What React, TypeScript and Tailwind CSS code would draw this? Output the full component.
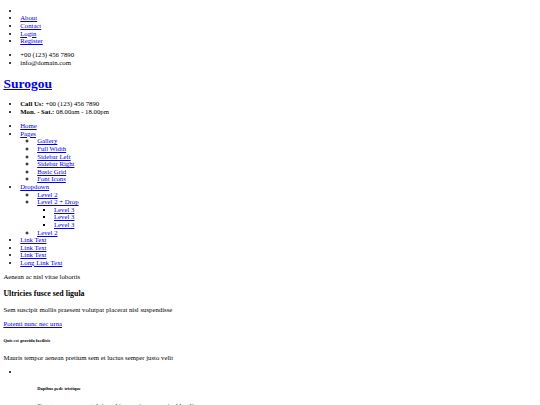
import React from "react";

const A = ({ children }: { children: React.ReactNode }) => (
  <a href="#" className="text-[#0000ee] underline">
    {children}
  </a>
);

const topLinks = ["About", "Contact", "Login", "Register"];
const pages = ["Gallery", "Full Width", "Sidebar Left", "Sidebar Right", "Basic Grid", "Font Icons"];

export default function App() {
  return (
    <div className="[zoom:0.421875] font-['Liberation_Serif',serif] text-[16px] leading-[18px] text-black">
      <div className="mx-2 my-2">
        <ul className="list-disc pl-10 my-4">
          <li>{"\u00a0"}</li>
          {topLinks.map((l) => (
            <li key={l}>
              <A>{l}</A>
            </li>
          ))}
        </ul>
        <ul className="list-disc pl-10 my-4">
          <li>+00 (123) 456 7890</li>
          <li>info@domain.com</li>
        </ul>

        <h1 className="text-[32px] leading-[37px] font-bold my-[21.44px]">
          <A>Surogou</A>
        </h1>

        <ul className="list-disc pl-10 my-4">
          <li>
            <strong>Call Us:</strong> +00 (123) 456 7890
          </li>
          <li>
            <strong>Mon. - Sat.:</strong> 08.00am - 18.00pm
          </li>
        </ul>

        <ul className="list-disc pl-10 my-4">
          <li>
            <A>Home</A>
          </li>
          <li>
            <A>Pages</A>
            <ul className="list-[circle] pl-10">
              {pages.map((p) => (
                <li key={p}>
                  <A>{p}</A>
                </li>
              ))}
            </ul>
          </li>
          <li>
            <A>Dropdown</A>
            <ul className="list-[circle] pl-10">
              <li>
                <A>Level 2</A>
              </li>
              <li>
                <A>Level 2 + Drop</A>
                <ul className="list-[square] pl-10">
                  <li>
                    <A>Level 3</A>
                  </li>
                  <li>
                    <A>Level 3</A>
                  </li>
                  <li>
                    <A>Level 3</A>
                  </li>
                </ul>
              </li>
              <li>
                <A>Level 2</A>
              </li>
            </ul>
          </li>
          <li>
            <A>Link Text</A>
          </li>
          <li>
            <A>Link Text</A>
          </li>
          <li>
            <A>Link Text</A>
          </li>
          <li>
            <A>Long Link Text</A>
          </li>
        </ul>

        <p className="my-4">Aenean ac nisl vitae lobortis</p>
        <h3 className="text-[18.72px] leading-[21.5px] font-bold my-[18.72px]">Ultricies fusce sed ligula</h3>
        <p className="my-4">Sem suscipit mollis praesent volutpat placerat nisl suspendisse</p>
        <p className="my-4">
          <A>Potenti nunc nec urna</A>
        </p>
        <h6 className="text-[10.72px] leading-[12.3px] font-bold my-[24.98px]">Quis est gravida facilisis</h6>
        <p className="my-4">Mauris tempor aenean pretium sem et luctus semper justo velit</p>

        <ul className="list-disc pl-10 my-4">
          <li>
            <div>{"\u00a0"}</div>
            <div className="mx-10">
              <h6 className="text-[10.72px] leading-[12.3px] font-bold my-[24.98px]">Dapibus pede tristique</h6>
              <p className="my-4">Congue quam nec ut dui morbi ac sapien non enim blandit</p>
            </div>
          </li>
        </ul>
      </div>
    </div>
  );
}
